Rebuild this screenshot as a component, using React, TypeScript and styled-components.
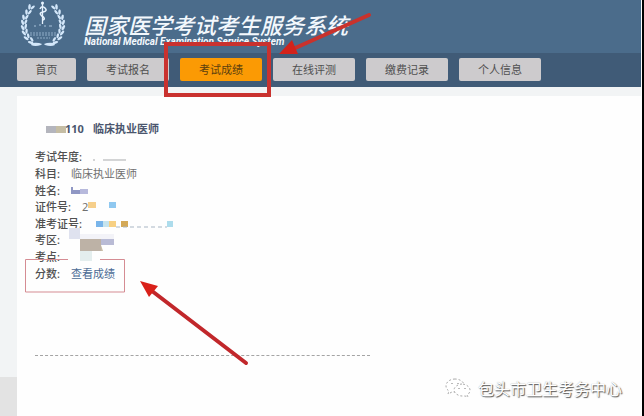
import React from "react";
import styled, { createGlobalStyle } from "styled-components";

const GlobalStyle = createGlobalStyle`
  * { box-sizing: border-box; }
  body {
    margin: 0;
    background: #000;
    font-family: "Noto Sans", "Noto Sans CJK SC", sans-serif;
    font-size: 11px;
    color: #4a4a4a;
  }
`;

const Page = styled.div`
  position: relative;
  display: flex;
  flex-direction: column;
  min-height: 100vh;
  margin-right: 2px;
  border-right: 1px solid #fff;
  background: #fff;
  overflow: hidden;
`;

const Header = styled.header`
  display: flex;
  align-items: flex-start;
  gap: 17px;
  height: 53px;
  padding-left: 20px;
  background: #4b6c8b;
  color: #f3f8fd;
`;

const Titles = styled.div`
  display: flex;
  flex-direction: column;
  padding-top: 12px;
`;

const Title = styled.h1`
  margin: 0;
  font-family: "Noto Sans CJK SC", sans-serif;
  font-size: 22px;
  line-height: 24px;
  font-weight: 500;
  font-style: italic;
  white-space: nowrap;
`;

const Subtitle = styled.p`
  margin: 0;
  font-family: Roboto, sans-serif;
  font-size: 10px;
  line-height: 12px;
  font-weight: 700;
  font-style: italic;
  white-space: nowrap;
`;

const Nav = styled.nav`
  display: flex;
  gap: 11px;
  padding: 5px 17px 6px;
  background: #405b77;
`;

const NavButton = styled.button<{ $active?: boolean; $short?: boolean }>`
  width: ${(p) => (p.$short ? 59 : 82)}px;
  height: 23px;
  padding: 0;
  border: 0;
  border-radius: 2px;
  background: ${(p) => (p.$active ? "#fb9a04" : "#cdcbcd")};
  color: ${(p) => (p.$active ? "#5c400f" : "#505050")};
  font-family: "Noto Sans CJK SC", sans-serif;
  font-size: 11px;
  line-height: 23px;
`;

const Body = styled.div`
  display: flex;
  flex: 1;
  padding-top: 9px;
  background: linear-gradient(#f2f4f5 0 290px, #e3e3e3 290px);
`;

const Panel = styled.main`
  flex: 1;
  margin-left: 17px;
  padding: 25px 18px 0;
  background: #fefefe;
`;

const Heading = styled.h2`
  display: flex;
  gap: 9px;
  margin: 0 0 13px 30px;
  font-size: 11px;
  line-height: 15px;
  font-weight: 700;
  color: #4b566e;
`;

const Details = styled.dl`
  display: grid;
  grid-auto-rows: 1fr;
  height: 133px;
  margin: 0;
`;

const Row = styled.div`
  display: flex;
  align-items: center;
  gap: 11px;
  line-height: 16px;
`;

const Label = styled.dt`
  font-weight: 500;
  color: #505050;
`;

const Value = styled.dd`
  margin: 0;
  color: #707070;
`;

const ScoreLink = styled.a`
  color: #4a6a94;
  text-decoration: none;
`;

const Divider = styled.hr`
  width: 335px;
  max-width: 100%;
  margin: 73px 0 0;
  border: 0;
  border-top: 1px dashed #a4a4a4;
`;

const Overlay = styled.svg`
  position: absolute;
  top: 0;
  left: 0;
  pointer-events: none;
`;

const Watermark = styled.div`
  position: absolute;
  right: 19px;
  bottom: 16px;
  display: flex;
  align-items: center;
  gap: 7px;
  color: #fff;
  font-family: "Noto Sans CJK SC", sans-serif;
  font-size: 16px;
  line-height: 24px;
  text-shadow: 1px 1px 1px #555, 0 0 1px #aaa;
`;

const leaves = [
  [11, 7, 28], [8, 12, 22], [5, 17, 14], [4, 22, 6], [4, 27, -6], [5, 32, -18], [7, 37, -32], [11, 41, -52],
];

function Emblem() {
  return (
    <svg width="47" height="48" viewBox="0 0 47 48" aria-hidden="true">
      {[false, true].map((flip) => (
        <g key={String(flip)} transform={flip ? "translate(46 0) scale(-1 1)" : undefined} fill="#d3e7fa">
          {leaves.map(([x, y, r]) => (
            <g key={y} transform={`translate(${x} ${y}) rotate(${r})`}>
              <ellipse cx="-1.500" cy="0" rx="1.300" ry="2.900" transform="rotate(-24)" />
              <ellipse cx="1.500" cy="-1" rx="1.200" ry="2.600" transform="rotate(20)" />
            </g>
          ))}
          <path d="M12 43q6-1 10 1l-1 1q-6 2-10 0z" />
        </g>
      ))}
      <path d="M22.500 2v22" stroke="#e6f2fd" strokeWidth="1.300" />
      <circle cx="22.500" cy="3" r="1.500" fill="#e6f2fd" />
      <path d="M20 9q2-4 5-1t-2 4-1 4 1 4" fill="none" stroke="#e6f2fd" strokeWidth="1.600" />
      <path d="M14 26h2m3-1h2m3 1h2m3 0h3" stroke="#a9c2da" />
      <path d="M10 33h27M10 35h27M17 38h13" stroke="#8fabc7" strokeWidth="1.200" strokeDasharray="2 1" />
    </svg>
  );
}

function Mosaic() {
  return (
    <Overlay width="200" height="270" aria-hidden="true">
      <path d="M46 126h10v7H46z" fill="#b4b5bd" />
      <path d="M56 126h10v7H56z" fill="#c5bda4" />
      <path d="M93 160h2M103 160h23" stroke="#a9abad" />
      <path d="M71 187h2v7h-2zM73 190h7v4h-7z" fill="#8f97c4" />
      <path d="M80 189h8v5h-8z" fill="#b7b9dc" />
      <path d="M88 202h8v6h-8z" fill="#f6cf8b" />
      <path d="M109 202h7v6h-7z" fill="#8fc8f0" />
      <path d="M96 221h7v6h-7z" fill="#79b5ea" />
      <path d="M103 221h6v6h-6z" fill="#c6e4ee" />
      <path d="M109 221h7v6h-7z" fill="#f7d083" />
      <path d="M121 221h7v6h-7z" fill="#d4a957" />
      <path d="M116 227h51" stroke="#a9b6c4" strokeDasharray="4 3" />
      <path d="M167 221h6v6h-6z" fill="#addcec" />
      <path d="M69 228h11v11H69z" fill="#dfe2ef" />
      <path d="M80 234h34v5H80z" fill="#f3f3f8" />
      <path d="M101 239h13v6h-13z" fill="#b9bbd5" />
      <path d="M80 239h21v12H80z" fill="#bdb2a6" />
      <path d="M101 245l2 6h-2z" fill="#c8bda6" />
      <path d="M80 251h12v10H80z" fill="#e4eeee" />
    </Overlay>
  );
}

function Markers() {
  return (
    <Overlay width="400" height="380" aria-hidden="true">
      <rect x="166" y="44" width="103" height="51" fill="none" stroke="#c9322f" strokeWidth="4" />
      <path d="M369 15L293 49" stroke="#c9322c" strokeWidth="4" strokeLinecap="round" />
      <path d="M279 54l13-14 6 14z" fill="#d3231b" />
      <path d="M68 259.500H25.500V292H124.500V259.500H100" fill="none" stroke="#d58c93" />
      <path d="M246 363L152 291" stroke="#c1272b" strokeWidth="4" strokeLinecap="round" />
      <path d="M140 281l18 5-9 11z" fill="#d9211a" />
    </Overlay>
  );
}

function ChatIcon() {
  return (
    <svg width="26" height="20" viewBox="0 0 26 20" fill="#fff" stroke="#aaa" strokeDasharray="2 2" aria-hidden="true">
      <path d="M10 1C5 1 1 4 1 8c0 2 1 4 3 5l-1 3 4-2h4c5-1 8-3 8-7 0-3-4-6-9-6z" />
      <path d="M17 6c-4 0-8 3-8 6s4 6 8 6h3l3 1-1-2c2-1 3-3 3-5 0-3-4-6-8-6z" />
      <path d="M7 5v1M13 5v1M14 10v1M20 10v1" stroke="#777" />
    </svg>
  );
}

const tabs = ["首页", "考试报名", "考试成绩", "在线评测", "缴费记录", "个人信息"];

const details: { label: string; value?: React.ReactNode }[] = [
  { label: "考试年度:" },
  { label: "科目:", value: "临床执业医师" },
  { label: "姓名:" },
  { label: "证件号:", value: "2" },
  { label: "准考证号:" },
  { label: "考区:" },
  { label: "考点:" },
  { label: "分数:", value: <ScoreLink href="#score">查看成绩</ScoreLink> },
];

export default function App() {
  return (
    <Page>
      <GlobalStyle />
      <Header>
        <Emblem />
        <Titles>
          <Title>国家医学考试考生服务系统</Title>
          <Subtitle>National Medical Examination Service System</Subtitle>
        </Titles>
      </Header>
      <Nav>
        {tabs.map((tab, i) => (
          <NavButton key={tab} type="button" $short={i === 0} $active={i === 2}>
            {tab}
          </NavButton>
        ))}
      </Nav>
      <Body>
        <Panel>
          <Heading>
            <span>110</span>
            <span>临床执业医师</span>
          </Heading>
          <Details>
            {details.map((d) => (
              <Row key={d.label}>
                <Label>{d.label}</Label>
                <Value>{d.value}</Value>
              </Row>
            ))}
          </Details>
          <Divider />
        </Panel>
      </Body>
      <Mosaic />
      <Markers />
      <Watermark>
        <ChatIcon />
        <span>包头市卫生考务中心</span>
      </Watermark>
    </Page>
  );
}
